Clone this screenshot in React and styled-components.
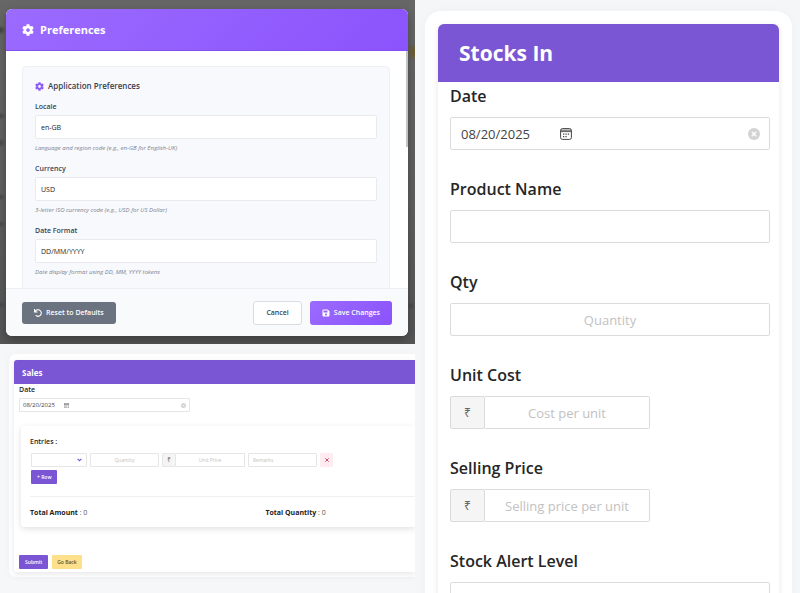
import React, { useId } from "react";
import styled, { createGlobalStyle, css } from "styled-components";
import { FaCog, FaUndo, FaSave } from "react-icons/fa";

const GlobalStyle = createGlobalStyle`
  *, *::before, *::after { box-sizing: border-box; }
  html, body { margin: 0; }
  body {
    font-family: "Open Sans", "Noto Sans", sans-serif;
    color: #262626;
    background: #f5f6f8;
  }
  button, input, select { font-family: inherit; margin: 0; }
  h1, h2, h3, p { margin: 0; }
`;

const violet = "#7a56d4";

const Page = styled.div`
  display: grid;
  grid-template-columns: minmax(0, 415fr) minmax(0, 385fr);
  height: 100vh;
  overflow: hidden;
`;

const LeftColumn = styled.div`
  display: flex;
  flex-direction: column;
  min-width: 0;
`;

/* ---------- Preferences dialog ---------- */

const Backdrop = styled.div`
  padding: 9px 7px 8px 6px;
  background:
    radial-gradient(ellipse 8px 9px at 100% 52px, #6f5a20, transparent),
    radial-gradient(ellipse 6px 5px at 0 30px, #3f3f3f, transparent),
    radial-gradient(ellipse 6px 4px at 0 116px, #484848, transparent),
    radial-gradient(ellipse 6px 5px at 0 143px, #484848, transparent),
    radial-gradient(ellipse 6px 4px at 0 197px, #484848, transparent),
    radial-gradient(ellipse 6px 4px at 0 224px, #484848, transparent),
    radial-gradient(ellipse 6px 4px at 0 305px, #484848, transparent),
    radial-gradient(ellipse 4px 4px at 411px 306px, #484848, transparent),
    linear-gradient(#666, #5f5f5f 60%, #555);
`;

const Dialog = styled.section`
  border-radius: 6px;
  overflow: hidden;
  background: #fff;
  box-shadow: 0 4px 10px rgba(0, 0, 0, 0.3);
`;

const DialogHeader = styled.header`
  display: flex;
  align-items: center;
  gap: 6px;
  padding: 0 16px;
  height: 42px;
  color: #fff;
  background: linear-gradient(135deg, #9b6bff, #8b53fc);
  border-bottom: 1px solid #8450f0;
`;

const DialogTitle = styled.h2`
  font-size: 11px;
  line-height: 18px;
  font-weight: 700;
`;

const DialogBody = styled.div`
  position: relative;
  height: 237px;
  overflow: hidden;
  padding: 15px 18px 0 16px;
`;

const ScrollThumb = styled.span`
  position: absolute;
  top: 0;
  right: 0;
  width: 2px;
  height: 96px;
  background: #c1c3c5;
`;

const Group = styled.div`
  display: flex;
  flex-direction: column;
  gap: 8px;
  min-height: 260px;
  padding: 12px;
  border: 1px solid #eceff3;
  border-radius: 4px;
  background: #f8f9fd;
`;

const GroupTitle = styled.h3`
  display: flex;
  align-items: center;
  gap: 4px;
  font-size: 8px;
  line-height: 14px;
  font-weight: 600;
  color: #374151;
  svg { color: #8b5cf6; }
`;

const PrefField = styled.div`
  display: flex;
  flex-direction: column;
  padding-bottom: 1px;
`;

const PrefLabel = styled.label`
  font-size: 7px;
  line-height: 12px;
  font-weight: 600;
  color: #374151;
`;

const PrefInput = styled.input`
  width: 100%;
  height: 24px;
  margin: 2px 0 3px;
  padding: 0 5px;
  border: 1px solid #e8eaee;
  border-radius: 2px;
  background: #fff;
  color: #222;
  font-size: 7px;
`;

const Hint = styled.p`
  font-size: 6px;
  line-height: 12px;
  font-style: italic;
  color: #7b8290;
`;

const DialogFooter = styled.footer`
  display: flex;
  align-items: center;
  gap: 8px;
  height: 48px;
  padding: 0 16px;
  border-top: 1px solid #eceef1;
  background: #f9fafc;
`;

const PrefButton = styled.button`
  display: flex;
  align-items: center;
  justify-content: center;
  gap: 4px;
  height: ${(p) => (p.$tone === "grey" ? "22px" : "24px")};
  padding: 0 ${(p) => (p.$tone === "plain" ? "12px" : "11px")};
  border: 1px solid transparent;
  border-radius: 3px;
  font-size: 7px;
  font-weight: 600;
  white-space: nowrap;
  ${(p) => p.$push && css`margin-right: auto;`}
  ${(p) => p.$tone === "grey" && css`color: #fff; background: #6b7280;`}
  ${(p) => p.$tone === "plain" && css`color: #374151; background: #fff; border-color: #d9dde3;`}
  ${(p) => p.$tone === "primary" && css`color: #fff; background: linear-gradient(135deg, #9b6bff, #8b53fc) border-box;`}
`;

/* ---------- Shared card shell ---------- */

const Shell = styled.section`
  background: #fff;
  border-radius: ${(p) => (p.$small ? "7px 0 0 7px" : "16px 16px 0 0")};
  padding: ${(p) => (p.$small ? "6px 0 5px 5px" : "13px 13px 0")};
  box-shadow: 0 0 10px rgba(0, 0, 0, 0.03);
`;

const Card = styled.div`
  border-radius: ${(p) => (p.$small ? "3px 0 0 3px" : "6px 6px 0 0")};
  overflow: hidden;
  background: #fff;
  box-shadow: 0 2px 6px rgba(0, 0, 0, 0.1);
`;

const CardHeader = styled.header`
  display: flex;
  align-items: center;
  height: ${(p) => (p.$small ? "24px" : "58px")};
  padding: 0 ${(p) => (p.$small ? "8px" : "21px")};
  color: #fff;
  background: ${violet};
`;

const CardTitle = styled.h1`
  font-size: ${(p) => (p.$small ? "8px" : "21px")};
  font-weight: 700;
`;

/* ---------- Sales ---------- */

const SalesArea = styled.div`
  flex: 1;
  padding: 10px 0 0 9px;
  background: #f6f7f9;
`;

const SalesBody = styled.div`
  display: flex;
  flex-direction: column;
  align-items: flex-start;
  padding: 0 0 3px 5px;
`;

const SmallLabel = styled.label`
  font-size: 7px;
  line-height: 12px;
  font-weight: 600;
`;

const smallBox = css`
  height: 14px;
  border: 1px solid #e6e6e6;
  border-radius: 1px;
  background: #fff;
`;

const SmallDate = styled.div`
  ${smallBox}
  display: flex;
  align-items: center;
  width: 171px;
  margin-top: 2px;
  padding: 0 3px;
`;

const SmallInput = styled.input`
  ${smallBox}
  width: 69px;
  padding: 0 4px;
  font-size: 5px;
  text-align: ${(p) => (p.$left ? "left" : "center")};
  &::placeholder { color: #c2c2c2; }
`;

const DateValue = styled.input`
  width: ${(p) => (p.$small ? "41px" : "99px")};
  padding: 0;
  border: 0;
  outline: 0;
  background: none;
  color: #444;
  font-size: ${(p) => (p.$small ? "6px" : "13px")};
`;

const IconButton = styled.button`
  display: flex;
  padding: 0;
  border: 0;
  background: none;
  color: ${(p) => (p.$end ? "#d3d3d3" : "#444")};
  ${(p) => p.$end && css`margin-left: auto;`}
`;

const EntriesCard = styled.div`
  align-self: stretch;
  margin: 14px 0 28px 2px;
  padding: 10px 0 8px 9px;
  border-radius: 3px 0 0 3px;
  background: #fff;
  box-shadow: 0 2px 6px rgba(0, 0, 0, 0.12);
`;

const EntriesTitle = styled.h2`
  font-size: 7px;
  line-height: 12px;
  font-weight: 600;
`;

const EntryRow = styled.div`
  display: flex;
  align-items: center;
  gap: 3px;
  padding: 5px 0 3px 1px;
`;

const SelectWrap = styled.span`
  display: grid;
  align-items: center;
  width: 56px;
  svg { grid-area: 1 / 1; justify-self: end; margin-right: 5px; pointer-events: none; }
`;

const SmallSelect = styled.select`
  ${smallBox}
  grid-area: 1 / 1;
  width: 100%;
  appearance: none;
  font-size: 5px;
`;

const SmallGroup = styled.div`
  display: flex;
  input { border-left: 0; }
`;

const SmallAddon = styled.span`
  ${smallBox}
  display: grid;
  place-items: center;
  width: 14px;
  background: #f5f5f5;
  font-size: 6px;
  color: #666;
`;

const SmallButton = styled.button`
  height: 14px;
  padding: 0 ${(p) => (p.$wide ? "6px" : "5px")};
  border: 0;
  border-radius: 1px;
  font-size: 5px;
  font-weight: 600;
  white-space: nowrap;
  ${(p) => p.$tone === "primary" && css`color: #fff; background: ${violet};`}
  ${(p) => p.$tone === "yellow" && css`color: #5b512c; background: #ffe08a;`}
  ${(p) => p.$tone === "danger" && css`
    display: grid;
    place-items: center;
    width: 13px;
    padding: 0;
    color: #c93a62;
    background: #feecf0;
  `}
`;

const RowAction = styled.div`
  display: flex;
  padding-left: 1px;
`;

const Totals = styled.div`
  display: grid;
  grid-template-columns: 236fr 150fr;
  margin-top: 12px;
  padding-top: 10px;
  border-top: 1px solid #f0f0f0;
  font-size: 7px;
  line-height: 12px;
  color: #555;
  strong { color: #222; }
`;

const FormActions = styled.div`
  display: flex;
  gap: 4px;
`;

/* ---------- Stocks in ---------- */

const StocksArea = styled.div`
  padding: 11px 8px 0 10px;
  background: #f5f6f8;
`;

const StocksBody = styled.div`
  display: flex;
  flex-direction: column;
  gap: 26px;
  padding: 1px 9px 0 12px;
`;

const StockField = styled.div`
  display: flex;
  flex-direction: column;
`;

const StockLabel = styled.label`
  margin-bottom: 8px;
  font-size: 16px;
  line-height: 26px;
  font-weight: 600;
`;

const largeBox = css`
  width: 100%;
  height: 33px;
  border: 1px solid #dbdbdb;
  border-radius: 2px;
  background: #fff;
`;

const StockDate = styled.div`
  ${largeBox}
  display: flex;
  align-items: center;
  padding: 0 9px 0 10px;
`;

const StockInput = styled.input`
  ${largeBox}
  padding: 0 10px;
  font-size: 13px;
  text-align: center;
  &::placeholder { color: #c2c2c2; }
`;

const PriceGroup = styled.div`
  display: flex;
  width: 63%;
  max-width: 200px;
  input { border-left: 0; border-radius: 0 2px 2px 0; }
`;

const PriceAddon = styled.span`
  ${largeBox}
  display: grid;
  place-items: center;
  flex: 0 0 35px;
  background: #f5f5f5;
  color: #666;
  font-size: 12px;
`;

function CalendarIcon({ size }) {
  return (
    <svg width={size} height={size} viewBox="0 0 12 12" fill="none" stroke="currentColor" aria-hidden="true">
      <rect x="0.6" y="0.6" width="10.8" height="10.8" rx="1.8" />
      <path d="M0.6 2.2h10.8M0.6 3.6h10.8" strokeWidth="0.9" />
      <path d="M3 6.2h1.3M5.4 6.2h1.3M7.8 6.2h1.3M3 8.6h1.3M5.4 8.6h1.3" strokeWidth="1.3" />
    </svg>
  );
}

function ClearIcon({ size }) {
  return (
    <svg width={size} height={size} viewBox="0 0 12 12" aria-hidden="true">
      <circle cx="6" cy="6" r="6" fill="currentColor" />
      <path d="M3.8 3.8l4.4 4.4M8.2 3.8L3.8 8.2" stroke="#fff" strokeWidth="1.3" />
    </svg>
  );
}

function ChevronIcon() {
  return (
    <svg width="5" height="4" viewBox="0 0 5 4" fill="none" stroke={violet} aria-hidden="true">
      <path d="M0.6 0.8l1.9 1.9 1.9-1.9" strokeWidth="1.2" />
    </svg>
  );
}

function CrossIcon() {
  return (
    <svg width="4" height="4" viewBox="0 0 4 4" stroke="currentColor" aria-hidden="true">
      <path d="M0.3 0.3l3.4 3.4M3.7 0.3L0.3 3.7" strokeWidth="0.9" />
    </svg>
  );
}

function Preference({ label, value, hint }) {
  const id = useId();
  return (
    <PrefField>
      <PrefLabel htmlFor={id}>{label}</PrefLabel>
      <PrefInput id={id} defaultValue={value} aria-describedby={`${id}-hint`} />
      <Hint id={`${id}-hint`}>{hint}</Hint>
    </PrefField>
  );
}

function DateControls({ id, small }) {
  return (
    <>
      <DateValue id={id} $small={small} defaultValue="08/20/2025" />
      <IconButton type="button" aria-label="Choose date"><CalendarIcon size={small ? 5 : 12} /></IconButton>
      <IconButton type="button" $end aria-label="Clear date"><ClearIcon size={small ? 5 : 12} /></IconButton>
    </>
  );
}

function StockEntry({ label, placeholder, price }) {
  const id = useId();
  const input = <StockInput id={id} placeholder={placeholder} />;
  return (
    <StockField>
      <StockLabel htmlFor={id}>{label}</StockLabel>
      {price ? <PriceGroup><PriceAddon>₹</PriceAddon>{input}</PriceGroup> : input}
    </StockField>
  );
}

function Preferences() {
  return (
    <Backdrop>
      <Dialog role="dialog" aria-labelledby="preferences-title">
        <DialogHeader>
          <FaCog size={12} />
          <DialogTitle id="preferences-title">Preferences</DialogTitle>
        </DialogHeader>
        <DialogBody>
          <Group>
            <GroupTitle><FaCog size={9} />Application Preferences</GroupTitle>
            <Preference label="Locale" value="en-GB" hint="Language and region code (e.g., en-GB for English-UK)" />
            <Preference label="Currency" value="USD" hint="3-letter ISO currency code (e.g., USD for US Dollar)" />
            <Preference label="Date Format" value="DD/MM/YYYY" hint="Date display format using DD, MM, YYYY tokens" />
          </Group>
          <ScrollThumb />
        </DialogBody>
        <DialogFooter>
          <PrefButton type="button" $tone="grey" $push><FaUndo size={8} />Reset to Defaults</PrefButton>
          <PrefButton type="button" $tone="plain">Cancel</PrefButton>
          <PrefButton type="button" $tone="primary"><FaSave size={8} />Save Changes</PrefButton>
        </DialogFooter>
      </Dialog>
    </Backdrop>
  );
}

function Sales() {
  return (
    <SalesArea>
      <Shell $small>
        <Card $small>
          <CardHeader $small><CardTitle $small>Sales</CardTitle></CardHeader>
          <SalesBody>
            <SmallLabel htmlFor="sales-date">Date</SmallLabel>
            <SmallDate><DateControls id="sales-date" small /></SmallDate>
            <EntriesCard>
              <EntriesTitle>Entries :</EntriesTitle>
              <EntryRow>
                <SelectWrap>
                  <SmallSelect aria-label="Product"><option value="" /></SmallSelect>
                  <ChevronIcon />
                </SelectWrap>
                <SmallInput aria-label="Quantity" placeholder="Quantity" />
                <SmallGroup>
                  <SmallAddon>₹</SmallAddon>
                  <SmallInput aria-label="Unit Price" placeholder="Unit Price" />
                </SmallGroup>
                <SmallInput $left aria-label="Remarks" placeholder="Remarks" />
                <SmallButton type="button" $tone="danger" aria-label="Remove row"><CrossIcon /></SmallButton>
              </EntryRow>
              <RowAction><SmallButton type="button" $tone="primary" $wide>+ Row</SmallButton></RowAction>
              <Totals>
                <span><strong>Total Amount</strong> : 0</span>
                <span><strong>Total Quantity</strong> : 0</span>
              </Totals>
            </EntriesCard>
            <FormActions>
              <SmallButton type="button" $tone="primary" $wide>Submit</SmallButton>
              <SmallButton type="button" $tone="yellow">Go Back</SmallButton>
            </FormActions>
          </SalesBody>
        </Card>
      </Shell>
    </SalesArea>
  );
}

function StocksIn() {
  return (
    <StocksArea>
      <Shell>
        <Card>
          <CardHeader><CardTitle>Stocks In</CardTitle></CardHeader>
          <StocksBody>
            <StockField>
              <StockLabel htmlFor="stock-date">Date</StockLabel>
              <StockDate><DateControls id="stock-date" /></StockDate>
            </StockField>
            <StockEntry label="Product Name" />
            <StockEntry label="Qty" placeholder="Quantity" />
            <StockEntry label="Unit Cost" placeholder="Cost per unit" price />
            <StockEntry label="Selling Price" placeholder="Selling price per unit" price />
            <StockEntry label="Stock Alert Level" />
          </StocksBody>
        </Card>
      </Shell>
    </StocksArea>
  );
}

export default function App() {
  return (
    <>
      <GlobalStyle />
      <Page>
        <LeftColumn>
          <Preferences />
          <Sales />
        </LeftColumn>
        <StocksIn />
      </Page>
    </>
  );
}
